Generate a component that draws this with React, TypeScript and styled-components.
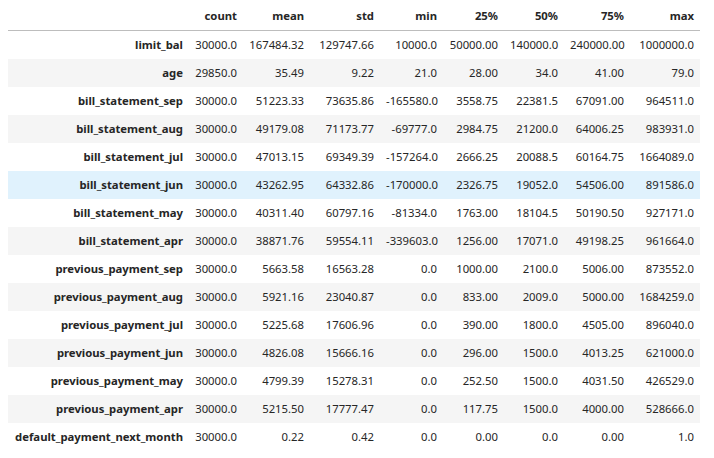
import React from "react";
import styled, { createGlobalStyle } from "styled-components";

const Global = createGlobalStyle`
  html, body { margin: 0; padding: 0; background: #ffffff; }
  body { padding: 2px 8px 0 8px; }
`;

const Table = styled.table`
  border-collapse: collapse;
  table-layout: fixed;
  width: 692px;
  font-family: "Segoe UI", "Noto Sans", "Open Sans", sans-serif;
  font-size: 11.3px;
  color: #262626;
`;

const HeadRow = styled.tr`
  border-bottom: 1px solid #bdbdbd;
`;

const HeadCell = styled.th`
  padding: 6px 6px;
  line-height: 16px;
  height: 28px;
  box-sizing: border-box;
  text-align: right;
  font-weight: 700;
  white-space: nowrap;
  overflow: hidden;
`;

const Row = styled.tr<{ $striped: boolean; $hover: boolean }>`
  background: ${(p) => (p.$hover ? "#e0f2fd" : p.$striped ? "#f5f5f5" : "#ffffff")};
`;

const IndexCell = styled.th`
  padding: 6px 6px;
  line-height: 16px;
  height: 28px;
  box-sizing: border-box;
  text-align: right;
  font-weight: 700;
  white-space: nowrap;
`;

const Cell = styled.td`
  padding: 6px 6px;
  line-height: 16px;
  height: 28px;
  box-sizing: border-box;
  text-align: right;
  white-space: nowrap;
`;

const widths = [181, 54, 67, 70, 63, 61, 60, 66, 70];
const columns = ["count", "mean", "std", "min", "25%", "50%", "75%", "max"];

const rows: [string, string[]][] = [
  ["limit_bal", ["30000.0", "167484.32", "129747.66", "10000.0", "50000.00", "140000.0", "240000.00", "1000000.0"]],
  ["age", ["29850.0", "35.49", "9.22", "21.0", "28.00", "34.0", "41.00", "79.0"]],
  ["bill_statement_sep", ["30000.0", "51223.33", "73635.86", "-165580.0", "3558.75", "22381.5", "67091.00", "964511.0"]],
  ["bill_statement_aug", ["30000.0", "49179.08", "71173.77", "-69777.0", "2984.75", "21200.0", "64006.25", "983931.0"]],
  ["bill_statement_jul", ["30000.0", "47013.15", "69349.39", "-157264.0", "2666.25", "20088.5", "60164.75", "1664089.0"]],
  ["bill_statement_jun", ["30000.0", "43262.95", "64332.86", "-170000.0", "2326.75", "19052.0", "54506.00", "891586.0"]],
  ["bill_statement_may", ["30000.0", "40311.40", "60797.16", "-81334.0", "1763.00", "18104.5", "50190.50", "927171.0"]],
  ["bill_statement_apr", ["30000.0", "38871.76", "59554.11", "-339603.0", "1256.00", "17071.0", "49198.25", "961664.0"]],
  ["previous_payment_sep", ["30000.0", "5663.58", "16563.28", "0.0", "1000.00", "2100.0", "5006.00", "873552.0"]],
  ["previous_payment_aug", ["30000.0", "5921.16", "23040.87", "0.0", "833.00", "2009.0", "5000.00", "1684259.0"]],
  ["previous_payment_jul", ["30000.0", "5225.68", "17606.96", "0.0", "390.00", "1800.0", "4505.00", "896040.0"]],
  ["previous_payment_jun", ["30000.0", "4826.08", "15666.16", "0.0", "296.00", "1500.0", "4013.25", "621000.0"]],
  ["previous_payment_may", ["30000.0", "4799.39", "15278.31", "0.0", "252.50", "1500.0", "4031.50", "426529.0"]],
  ["previous_payment_apr", ["30000.0", "5215.50", "17777.47", "0.0", "117.75", "1500.0", "4000.00", "528666.0"]],
  ["default_payment_next_month", ["30000.0", "0.22", "0.42", "0.0", "0.00", "0.0", "0.00", "1.0"]],
];

export default function App() {
  return (
    <>
      <Global />
      <Table>
        <colgroup>
          {widths.map((w, i) => (
            <col key={i} style={{ width: w }} />
          ))}
        </colgroup>
        <thead>
          <HeadRow>
            <HeadCell />
            {columns.map((c) => (
              <HeadCell key={c}>{c}</HeadCell>
            ))}
          </HeadRow>
        </thead>
        <tbody>
          {rows.map(([name, vals], i) => (
            <Row key={name} $striped={i % 2 === 1} $hover={name === "bill_statement_jun"}>
              <IndexCell>{name}</IndexCell>
              {vals.map((v, j) => (
                <Cell key={j}>{v}</Cell>
              ))}
            </Row>
          ))}
        </tbody>
      </Table>
    </>
  );
}
